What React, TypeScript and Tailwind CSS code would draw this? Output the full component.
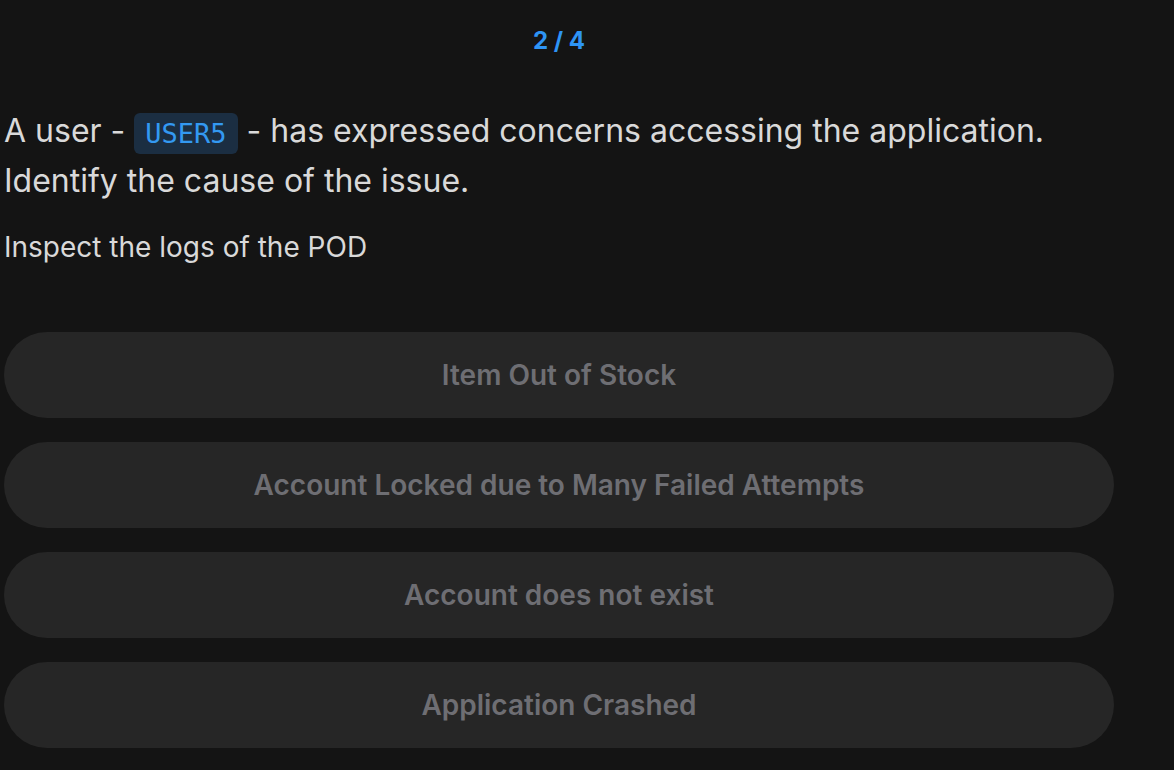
import React from "react";

const options = [
  "Item Out of Stock",
  "Account Locked due to Many Failed Attempts",
  "Account does not exist",
  "Application Crashed",
];

export default function App() {
  return (
    <div
      className="w-[1174px] h-[770px] bg-[#141414] overflow-hidden"
      style={{ fontFamily: "Inter, 'Noto Sans', sans-serif" }}
    >
      <div className="w-[1110px] ml-[4px] flex flex-col">
        <div className="pt-[26px] text-center text-[24px] font-bold text-[#2e94f5] leading-[30px]">
          2 / 4
        </div>
        <div className="mt-[50px] text-[32px] leading-[50px] text-[#d9d9d9]">
          A user -{" "}
          <code
            className="inline-block px-[11px] rounded-[6px] bg-[#1b2e42] text-[#3399f2] text-[27px] leading-[41px] align-middle"
            style={{ fontFamily: "'DejaVu Sans Mono', 'Liberation Mono', monospace" }}
          >
            USER5
          </code>{" "}
          - has expressed concerns accessing the application. Identify the cause of the issue.
        </div>
        <div className="mt-[22px] text-[28px] leading-[38px] text-[#d9d9d9]">
          Inspect the logs of the POD
        </div>
        <div className="mt-[66px] flex flex-col gap-[24px]">
          {options.map((o) => (
            <button
              key={o}
              className="h-[86px] w-full rounded-full bg-[#262626] text-[28px] font-semibold text-[#6e6e73]"
            >
              {o}
            </button>
          ))}
        </div>
      </div>
    </div>
  );
}
